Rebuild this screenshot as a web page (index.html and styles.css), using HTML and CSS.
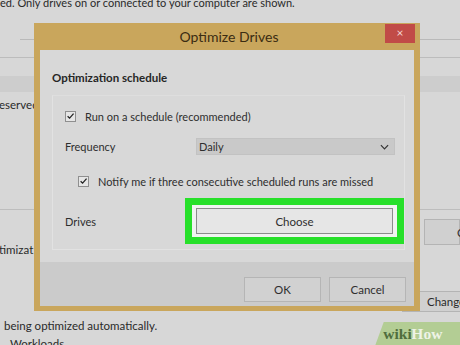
FILE: index.html
```html
<!DOCTYPE html>
<html>
<head>
<meta charset="utf-8">
<link rel="stylesheet" href="styles.css">
</head>
<body>
<div class="screen">
  <div class="bg">
    <div class="bg-top">ed. Only drives on or connected to your computer are shown.</div>
    <div class="bg-line1"></div>
    <div class="bg-line2"></div>
    <div class="bg-band"></div>
    <div class="bg-reserved">eserved</div>
    <div class="bg-line3"></div>
    <div class="bg-row-opt">
      <span class="bg-optimizat">timizat</span>
      <span class="bg-btn bg-btn-o">O</span>
    </div>
    <div class="bg-row-change">
      <span class="bg-btn bg-btn-change">Change</span>
    </div>
    <div class="bg-auto">being optimized automatically.</div>
    <div class="bg-last">Workloads</div>
  </div>

  <div class="dialog">
    <div class="titlebar">
      <span class="title">Optimize Drives</span>
      <span class="close">×</span>
    </div>
    <div class="inner">
      <div class="body">
        <div class="heading">Optimization schedule</div>
        <div class="group">
          <div class="row row-check">
            <span class="cb"><svg viewBox="0 0 10 10" width="10" height="10"><path d="M1.8 5.2 L4 7.4 L8.4 2.4" fill="none" stroke="#222" stroke-width="1.4"/></svg></span>
            <span class="label">Run on a schedule (recommended)</span>
          </div>
          <div class="row row-freq">
            <span class="label lbl-left">Frequency</span>
            <div class="select">
              <span>Daily</span>
              <svg viewBox="0 0 10 6" width="9" height="6"><path d="M1 1 L5 5 L9 1" fill="none" stroke="#333" stroke-width="1.3"/></svg>
            </div>
          </div>
          <div class="row row-notify">
            <span class="cb"><svg viewBox="0 0 10 10" width="10" height="10"><path d="M1.8 5.2 L4 7.4 L8.4 2.4" fill="none" stroke="#222" stroke-width="1.4"/></svg></span>
            <span class="label">Notify me if three consecutive scheduled runs are missed</span>
          </div>
          <div class="row row-drives">
            <span class="label lbl-left">Drives</span>
            <div class="highlight">
              <div class="choose">Choose</div>
            </div>
          </div>
        </div>
      </div>
      <div class="footer">
        <div class="btn">OK</div>
        <div class="btn">Cancel</div>
      </div>
    </div>
  </div>

  <div class="wm"><span class="wm-wiki">wiki</span><span class="wm-how">How</span></div>
</div>
</body>
</html>
```

FILE: styles.css
```css
html, body {
  margin: 0;
  padding: 0;
}
body {
  font-family: Lato, "Noto Sans", sans-serif;
  color: #2e2e2e;
}
.screen {
  position: relative;
  width: 460px;
  height: 345px;
  overflow: hidden;
  background: #d7d7d7;
}
.bg {
  display: flex;
  flex-direction: column;
  font-size: 11.5px;
  color: #2a2a2a;
}
.bg-top {
  height: 10px;
  line-height: 8px;
  margin-top: -1px;
  padding-left: 0;
  white-space: nowrap;
  font-size: 11px;
}
.bg-line1 {
  margin-top: 30px;
  margin-left: 20px;
  height: 1px;
  background: #b9b9b9;
}
.bg-line2 {
  margin-top: 17px;
  height: 1px;
  background: #bcbcbc;
}
.bg-band {
  margin-top: 18px;
  height: 16px;
  background: #cdcdcd;
}
.bg-reserved {
  margin-left: -1px;
  margin-top: 5px;
  height: 16px;
  line-height: 16px;
}
.bg-line3 {
  margin-top: 96px;
  height: 1px;
  background: #bdbdbd;
}
.bg-row-opt {
  margin-top: 9px;
  height: 26px;
  display: flex;
  justify-content: space-between;
  align-items: flex-end;
}
.bg-optimizat {
  margin-left: -1px;
  line-height: 14px;
  margin-bottom: -12px;
}
.bg-btn {
  display: flex;
  align-items: center;
  box-sizing: border-box;
  border: 1px solid #b4b4b4;
  background: #d0d0d0;
  font-size: 11.5px;
}
.bg-btn-o {
  width: 36px;
  height: 26px;
  padding-left: 32px;
}
.bg-row-change {
  margin-top: 46px;
  height: 21px;
  display: flex;
  justify-content: flex-end;
}
.bg-btn-change {
  width: 58px;
  height: 21px;
  padding-left: 24px;
  border-right: none;
}
.bg-auto {
  margin-top: 5px;
  padding-left: 4px;
  height: 18px;
  line-height: 18px;
}
.bg-last {
  margin-top: 2px;
  padding-left: 10px;
  line-height: 14px;
}

.dialog {
  position: absolute;
  left: 34px;
  top: 23px;
  width: 386px;
  height: 288px;
  box-sizing: border-box;
  background: #c9a65c;
  padding: 0 6px 5px 6px;
  display: flex;
  flex-direction: column;
}
.titlebar {
  height: 27px;
  position: relative;
  display: flex;
  align-items: center;
  justify-content: center;
}
.title {
  font-size: 14px;
  color: #3b2c12;
  padding-left: 4px;
}
.close {
  position: absolute;
  right: -1px;
  top: 1px;
  width: 30px;
  height: 19px;
  background: #c14b47;
  color: #f3d6d2;
  font-size: 12px;
  line-height: 18px;
  text-align: center;
}
.inner {
  flex: 1;
  display: flex;
  flex-direction: column;
  background: #d8d8d8;
}
.body {
  flex: 1;
  padding: 18px 9px 0 12px;
  display: flex;
  flex-direction: column;
}
.heading {
  font-size: 11.5px;
  font-weight: bold;
  color: #262626;
  height: 20px;
  line-height: 20px;
}
.group {
  margin-top: 7px;
  height: 155px;
  box-sizing: border-box;
  border: 1px solid #e2e2e2;
  border-top-color: #dedede;
  padding: 13px 0 0 12px;
  display: flex;
  flex-direction: column;
  font-size: 11px;
}
.row {
  display: flex;
  align-items: center;
}
.label {
  white-space: nowrap;
}
.cb {
  width: 11px;
  height: 11px;
  box-sizing: border-box;
  border: 1px solid #8f8f8f;
  background: #e6e6e6;
  display: flex;
  align-items: center;
  justify-content: center;
  margin-right: 9px;
}
.row-check {
  height: 14px;
}
.row-freq {
  margin-top: 15px;
  height: 17px;
}
.lbl-left {
  width: 131px;
}
.select {
  width: 199px;
  height: 17px;
  box-sizing: border-box;
  background: #c9c9c9;
  border: 1px solid #c2c2c2;
  display: flex;
  align-items: center;
  justify-content: space-between;
  padding: 0 5px 0 2px;
}
.row-notify {
  margin-top: 19px;
  height: 14px;
  padding-left: 13px;
}
.row-drives {
  margin-top: 10px;
}
.highlight {
  margin-left: -11px;
  width: 219px;
  height: 46px;
  box-sizing: border-box;
  border: 7px solid #27e02a;
  background: #f1f3f1;
  padding: 3px 4px;
  display: flex;
}
.choose {
  flex: 1;
  box-sizing: border-box;
  border: 1px solid #8c8c8c;
  background: #e6e6e6;
  display: flex;
  align-items: center;
  justify-content: center;
  font-size: 11.5px;
}
.footer {
  height: 44px;
  background: #cbcbcb;
  display: flex;
  justify-content: flex-end;
  align-items: flex-start;
  gap: 8px;
  padding: 15px 8px 0 0;
  box-sizing: border-box;
}
.btn {
  width: 77px;
  height: 25px;
  box-sizing: border-box;
  border: 1px solid #b5b5b5;
  background: #d1d1d1;
  display: flex;
  align-items: center;
  justify-content: center;
  font-size: 11.5px;
}

.wm {
  position: absolute;
  left: 375px;
  top: 322px;
  width: 95px;
  height: 24px;
  background: #b3cd94;
  transform: skewX(-20deg);
  transform-origin: bottom left;
  display: flex;
  align-items: center;
  padding-left: 4px;
  box-sizing: border-box;
  font-family: "Liberation Serif", serif;
  font-weight: bold;
  font-size: 15.5px;
}
.wm span {
  display: inline-block;
  transform: skewX(20deg);
}
.wm-wiki {
  color: #4f6d3d;
}
.wm-how {
  color: #eef3e6;
}
```
